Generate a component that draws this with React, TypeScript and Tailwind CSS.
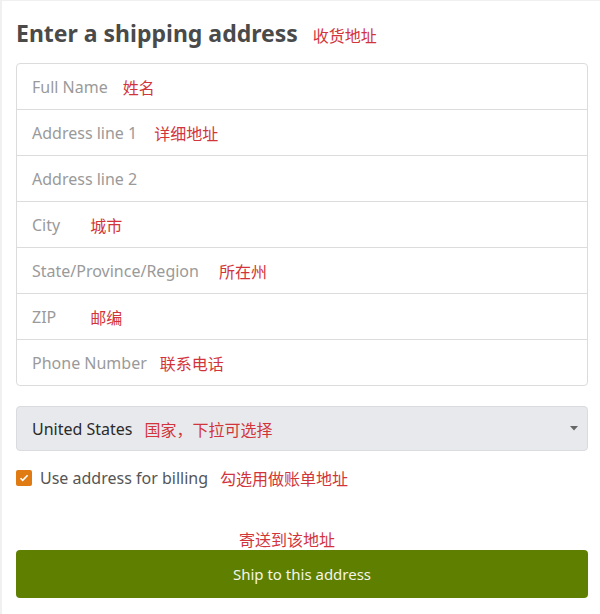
const fields = [
  { label: 'Full Name', note: '姓名', gap: 'ml-[15px]' },
  { label: 'Address line 1', note: '详细地址', gap: 'ml-[17px]' },
  { label: 'Address line 2', note: '', gap: '' },
  { label: 'City', note: '城市', gap: 'ml-[30px]' },
  { label: 'State/Province/Region', note: '所在州', gap: 'ml-5' },
  { label: 'ZIP', note: '邮编', gap: 'ml-[34px]' },
  { label: 'Phone Number', note: '联系电话', gap: 'ml-[13px]' },
];

const sans = "font-['Noto_Sans','Open_Sans',sans-serif]";
const cjk = "font-['Noto_Sans_CJK_SC',sans-serif]";

export default function App() {
  return (
    <div className={`h-[614px] w-[600px] overflow-hidden border-l-2 border-t border-[#f0f0f0] bg-white pl-[14px] pr-3 ${sans}`}>
      {/* Heading */}
      <div className="flex items-baseline pt-[16px]">
        <h1 className="text-[23px] font-bold leading-[32px] text-[#4a4a4a]">Enter a shipping address</h1>
        <span className={`ml-[15px] text-[16px] text-[#d2343b] ${cjk}`}>收货地址</span>
      </div>

      {/* Address fields */}
      <div className="mt-[14px] overflow-hidden rounded-[4px] border border-[#dcdcdc]">
        {fields.map((f, i) => (
          <div
            key={f.label}
            className={`flex items-center px-[15px] ${i > 0 ? 'h-[46px] border-t border-[#dcdcdc]' : 'h-[45px]'}`}
          >
            <span className="text-[16px] text-[#9a9a9a]">{f.label}</span>
            {f.note && <span className={`${f.gap} text-[16px] text-[#d2343b] ${cjk}`}>{f.note}</span>}
          </div>
        ))}
      </div>

      {/* Country select */}
      <div className="mt-5 flex h-[45px] items-center rounded-[4px] border border-[#dadbdf] bg-[#e8e9ec] pl-[15px] pr-[9px]">
        <span className="text-[16px] text-[#2b2b2b]">United States</span>
        <span className={`ml-3 text-[16px] text-[#d2343b] ${cjk}`}>国家，下拉可选择</span>
        <svg className="ml-auto" width="8" height="5" viewBox="0 0 8 5">
          <path d="M0 0h8L4 4.5z" fill="#666" />
        </svg>
      </div>

      {/* Billing checkbox */}
      <div className="mt-[15px] flex h-6 items-center">
        <span className="flex h-4 w-4 items-center justify-center rounded-[2px] bg-[#e07a12]">
          <svg width="10" height="8" viewBox="0 0 10 8">
            <path d="M1.5 4.2l2.2 2.2L8.6 1.3" fill="none" stroke="#fff" strokeWidth="1.6" />
          </svg>
        </span>
        <span className="ml-2 text-[16px] text-[#555]">Use address for billing</span>
        <span className={`ml-3 text-[16px] text-[#d2343b] ${cjk}`}>勾选用做账单地址</span>
      </div>

      {/* Submit */}
      <div className={`ml-[223px] mt-[39px] text-[16px] leading-[20px] text-[#d2343b] ${cjk}`}>寄送到该地址</div>
      <button className="mt-[1px] flex h-[48px] w-full items-center justify-center rounded-[4px] bg-[#5f7f00] text-[15px] text-[#f4f4e8]">
        Ship to this address
      </button>
    </div>
  );
}
